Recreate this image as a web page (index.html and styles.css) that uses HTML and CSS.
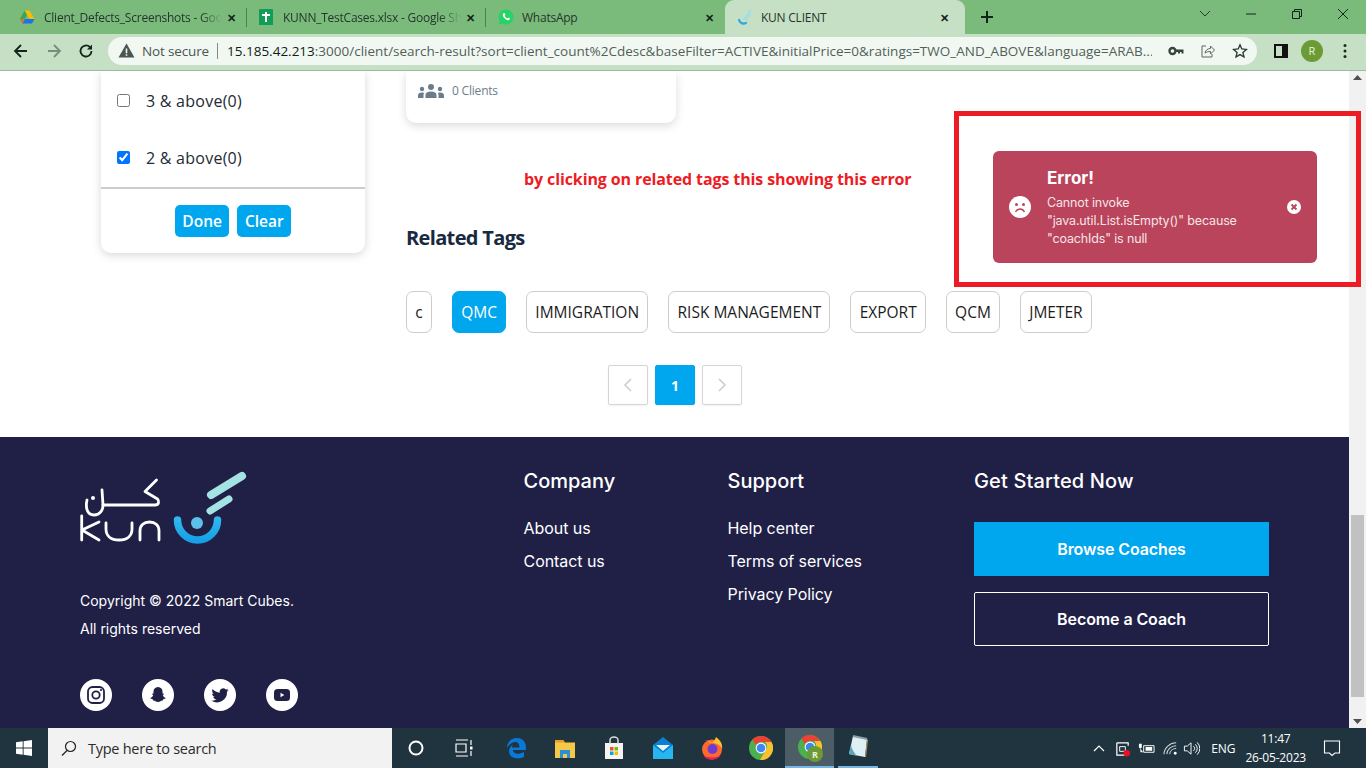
FILE: index.html
```html
<!DOCTYPE html>
<html lang="en">
<head>
<meta charset="utf-8">
<title>KUN CLIENT</title>
<link rel="stylesheet" href="styles.css">
</head>
<body>
<header class="tabstrip">
  <div class="tab tab-first">
    <svg class="fav" viewBox="0 0 16 16"><path d="M5.500 1.500h5l5 8.500h-5z" fill="#fbbc04"/><path d="M5.500 1.500 1 10l2.500 4.500L8 6z" fill="#34a853"/><path d="M5.800 10h9.700L13 14.500H3.500z" fill="#1a73e8"/><path d="M3.500 14.500 5.800 10H1z" fill="#ea6a35"/></svg>
    <span class="tab-title">Client_Defects_Screenshots - Goo</span>
    <span class="tab-x">✕</span>
  </div>
  <div class="tab tab-sheet">
    <svg class="fav" viewBox="0 0 16 16"><rect x="1" width="14" height="17" fill="#0f9d58" rx="1"/><path d="M4 6h8M8 3v10" stroke="#fff" stroke-width="2"/></svg>
    <span class="tab-title">KUNN_TestCases.xlsx - Google Sh</span>
    <span class="tab-x">✕</span>
  </div>
  <div class="tab tab-wa">
    <svg class="fav" viewBox="0 0 16 16"><path d="M8 .5a7.500 7.500 0 0 0-6.400 11.300L.5 15.500l3.800-1A7.500 7.500 0 1 0 8 .5z" fill="#25d366"/><path d="M5.500 4.200c-1.200 1-.9 2.800.6 4.600s3.500 3 4.900 2.200c1-.6 1-1.500.7-1.700l-1.500-.8-.8.9c-1-.3-2.300-1.600-2.700-2.700l.8-.8-.8-1.700c-.2-.2-.7-.2-1.200 0z" fill="#fff"/></svg>
    <span class="tab-title">WhatsApp</span>
    <span class="tab-x">✕</span>
  </div>
  <div class="tab tab-active">
    <svg class="fav" viewBox="0 0 16 16"><path d="M2 11a5 5 0 0 0 7 3" fill="none" stroke="#2aa9e8" stroke-width="2.200" stroke-linecap="round"/><path d="M7 10 14 1M9 11l4-6" stroke="#9fdde6" stroke-width="1.500" stroke-linecap="round"/></svg>
    <span class="tab-title">KUN CLIENT</span>
    <span class="tab-x">✕</span>
  </div>
  <svg class="newtab" viewBox="0 0 14 14"><path d="M7 1v12M1 7h12" stroke="#10261a" stroke-width="2"/></svg>
  <div class="win-controls">
    <svg viewBox="0 0 14 14"><path d="M2 4l5 5 5-5" fill="none" stroke="#26402c"/></svg>
    <svg viewBox="0 0 14 14"><path d="M2 7h10" stroke="#10261a"/></svg>
    <svg viewBox="0 0 14 14"><path d="M2.500 4.500h7v7h-7zM4.500 4.500v-2h7v7h-2" fill="none" stroke="#10261a"/></svg>
    <svg viewBox="0 0 14 14"><path d="M2 2l10 10M12 2 2 12" stroke="#10261a"/></svg>
  </div>
</header>

<nav class="toolbar">
  <svg class="nav-ic" viewBox="0 0 16 16"><path d="M14 8H2.500M8 2 2 8l6 6" fill="none" stroke="#15251b" stroke-width="1.800"/></svg>
  <svg class="nav-ic" viewBox="0 0 16 16"><path d="M2 8h11.500M8 2l6 6-6 6" fill="none" stroke="#74907a" stroke-width="1.800"/></svg>
  <svg class="nav-ic" viewBox="0 0 16 16"><path d="M13.500 8A5.500 5.500 0 1 1 11.800 4" fill="none" stroke="#15251b" stroke-width="1.800"/><path d="M14 1.500V6.500H9z" fill="#15251b"/></svg>
  <div class="omnibox">
    <svg class="warn" viewBox="0 0 16 16"><path d="M8 1.500 15.500 14.500H.5z" fill="#4a5550"/><path d="M8 6v4.500M8 11.500v1.500" stroke="#f2f8f2" stroke-width="1.500"/></svg>
    <span class="insecure">Not secure</span>
    <span class="omni-sep"></span>
    <span class="url"><b>15.185.42.213</b>:3000/client/search-result?sort=client_count%2Cdesc&amp;baseFilter=ACTIVE&amp;initialPrice=0&amp;ratings=TWO_AND_ABOVE&amp;language=ARAB...</span>
    <svg class="omni-ic" viewBox="0 0 16 16"><circle cx="4.500" cy="8" r="3" fill="none" stroke="#39443d" stroke-width="2.400"/><path d="M7 6.500h8.500v4h-2V9H12v1.500h-2V9H7z" fill="#39443d"/></svg>
    <svg class="omni-ic" viewBox="0 0 16 16"><path d="M6 3H2v11h10v-3" fill="none" stroke="#596a5e"/><path d="M5 10c.5-3 3-4.500 5.500-4.500V3l4 4-4 4V8.500C8.500 8.500 6.500 9 5 10z" fill="none" stroke="#596a5e"/></svg>
    <svg class="omni-ic" viewBox="0 0 16 16"><path d="M8 1.800 9.800 6l4.700.4-3.600 3 1.100 4.600L8 11.600 4 14l1.100-4.600-3.600-3L6.200 6z" fill="none" stroke="#26352b" stroke-width="1.300"/></svg>
  </div>
  <svg class="side-ic" viewBox="0 0 14 14"><path d="M1 1h12v12H1z" fill="none" stroke="#111" stroke-width="2"/><path d="M8 1h5v12H8z" fill="#111"/></svg>
  <span class="avatar">R</span>
  <svg class="menu-ic" viewBox="0 0 4 16"><circle cx="2" cy="2.500" r="1.500"/><circle cx="2" cy="8" r="1.500"/><circle cx="2" cy="13.500" r="1.500"/></svg>
</nav>

<div class="viewport">
  <main class="page">
    <section class="results">
      <aside class="filter">
        <label class="filter-row"><input type="checkbox"><span>3 &amp; above(0)</span></label>
        <label class="filter-row"><input type="checkbox" checked><span>2 &amp; above(0)</span></label>
        <div class="filter-actions">
          <button class="btn">Done</button>
          <button class="btn">Clear</button>
        </div>
      </aside>
      <div class="content">
        <article class="coach-card">
          <svg class="people" viewBox="0 0 26 14"><g fill="#6b7c8c"><circle cx="13" cy="3" r="3"/><path d="M7.500 14v-3c0-2 2-3.500 5.500-3.500s5.500 1.500 5.500 3.500v3z"/><circle cx="4" cy="5" r="2.200"/><path d="M0 14v-2.500C0 9.500 1.500 8.500 4 8.500c1 0 1.500.2 2 .4-.4.800-.5 1.500-.5 2.100v3z"/><circle cx="22" cy="5" r="2.200"/><path d="M26 14v-2.500c0-2-1.500-3-4-3-1 0-1.500.2-2 .4.400.800.500 1.500.500 2.100v3z"/></g></svg>
          <span>0 Clients</span>
        </article>
        <h2 class="related">Related Tags</h2>
        <div class="tags">
          <span class="tag tag-c">c</span>
          <span class="tag tag-on">QMC</span>
          <span class="tag">IMMIGRATION</span>
          <span class="tag">RISK MANAGEMENT</span>
          <span class="tag">EXPORT</span>
          <span class="tag">QCM</span>
          <span class="tag">JMETER</span>
        </div>
        <div class="pager">
          <span class="page-btn"><svg viewBox="0 0 10 16"><path d="M8 2 2 8l6 6" fill="none" stroke="#ccc" stroke-width="1.500"/></svg></span>
          <span class="page-btn page-on">1</span>
          <span class="page-btn"><svg viewBox="0 0 10 16"><path d="M2 2l6 6-6 6" fill="none" stroke="#ccc" stroke-width="1.500"/></svg></span>
        </div>
      </div>
    </section>

    <footer class="footer">
      <div class="brand">
        <svg class="logo" viewBox="0 0 170 75">
          <defs><linearGradient id="arc" x1="0" y1="0" x2="0" y2="1"><stop offset="0" stop-color="#2fb6ee"/><stop offset="1" stop-color="#17a0e6"/></linearGradient></defs>
          <g fill="none" stroke="#fff" stroke-width="2.800" stroke-linecap="round" stroke-linejoin="round">
            <path d="M1.700 46v24M19 52 2 60l17 10"/>
            <path d="M26 53v6c0 7 5 11 13 11s13-4 13-11v-6"/>
            <path d="M60 70v-9c0-6 4-9 9.500-9s9.500 3 9.500 9v9"/>
            <path d="M76.500 10 65 21.500 77.500 29c2 2 1.500 6-2.500 6H23"/>
            <path d="M22 20l1 15c0 5-3 10-9 10-6 0-9-6-7-15"/>
          </g>
          <circle cx="13" cy="28" r="2" fill="#fff"/>
          <path d="M97.500 50a20 20 0 0 0 40 0" fill="none" stroke="url(#arc)" stroke-width="7.500" stroke-linecap="round"/>
          <circle cx="117" cy="53" r="6" fill="#5cc0ea"/>
          <path d="M131 25 162 6" stroke="#a4e3e4" stroke-width="8" stroke-linecap="round"/>
          <path d="M130 41 149 29" stroke="#a4e3e4" stroke-width="7" stroke-linecap="round"/>
        </svg>
        <p class="copy">Copyright © 2022 Smart Cubes.</p>
        <p class="copy">All rights reserved</p>
        <div class="socials">
          <span class="social"><svg viewBox="0 0 20 20"><rect x="2" y="2" width="16" height="16" rx="4.500" fill="none" stroke="#202047" stroke-width="1.800"/><circle cx="10" cy="10" r="3.700" fill="none" stroke="#202047" stroke-width="1.800"/><circle cx="15" cy="5" r="1.100" fill="#202047"/></svg></span>
          <span class="social"><svg viewBox="0 0 20 20"><path d="M10 2c3 0 4.500 2.200 4.500 4.500v2l1.500.3c.4.500-.8 1-1.300 1.300.5 1.600 1.800 2.600 3 3-.2.900-1.500.9-2.400 1.200l-.5 1.200c-1.500-.3-2.600 1.500-4.800 1.500s-3.300-1.800-4.800-1.500l-.5-1.200c-.9-.3-2.200-.3-2.400-1.200 1.200-.4 2.500-1.400 3-3C4.800 9.800 3.600 9.300 4 8.800l1.500-.3v-2C5.500 4.200 7 2 10 2z" fill="#202047"/></svg></span>
          <span class="social"><svg viewBox="0 0 20 20"><path d="M18.500 5c-.6.300-1.300.5-2 .6.700-.4 1.300-1.100 1.500-1.900-.7.400-1.400.7-2.200.8a3.500 3.500 0 0 0-6 3.200C6.900 7.600 4.300 6.200 2.600 4.100c-.9 1.600-.5 3.600 1.100 4.700-.6 0-1.100-.2-1.600-.4 0 1.700 1.200 3.100 2.800 3.500-.5.100-1 .1-1.600 0 .4 1.400 1.800 2.400 3.300 2.400A7 7 0 0 1 1.500 15.700 10 10 0 0 0 17 6.800c.6-.5 1.100-1.100 1.500-1.800z" fill="#202047"/></svg></span>
          <span class="social"><svg viewBox="0 0 20 20"><rect x="2" y="4" width="16" height="12" rx="3.500" fill="#202047"/><path d="M8.500 7.700v4.600l3.800-2.300z" fill="#fff"/></svg></span>
        </div>
      </div>
      <div class="links col-company">
        <h3>Company</h3>
        <a>About us</a>
        <a>Contact us</a>
      </div>
      <div class="links col-support">
        <h3>Support</h3>
        <a>Help center</a>
        <a>Terms of services</a>
        <a>Privacy Policy</a>
      </div>
      <div class="start">
        <h3>Get Started Now</h3>
        <a class="cta cta-fill">Browse Coaches</a>
        <a class="cta cta-line">Become a Coach</a>
      </div>
    </footer>

    <p class="note">by clicking on related tags this showing this error</p>
    <div class="toast">
      <svg class="toast-face" viewBox="0 0 22 22"><circle cx="11" cy="11" r="11" fill="#fff"/><circle cx="7.500" cy="8.500" r="1.500" fill="#b9445c"/><circle cx="14.500" cy="8.500" r="1.500" fill="#b9445c"/><path d="M6.500 16c1-2 2.500-3 4.500-3s3.500 1 4.500 3" fill="none" stroke="#b9445c" stroke-width="1.500"/></svg>
      <div class="toast-body">
        <strong>Error!</strong>
        <p>Cannot invoke<br>"java.util.List.isEmpty()" because<br>"coachIds" is null</p>
      </div>
      <svg class="toast-x" viewBox="0 0 14 14"><circle cx="7" cy="7" r="7" fill="#fff"/><path d="M4.500 4.500l5 5M9.500 4.500l-5 5" stroke="#b9445c" stroke-width="1.800"/></svg>
    </div>
  </main>
  <div class="scrollbar">
    <svg class="sb-arrow" viewBox="0 0 9 5"><path d="M4.500 0 9 5H0z" fill="#505050"/></svg>
    <div class="sb-track"><div class="sb-thumb"></div></div>
    <svg class="sb-arrow" viewBox="0 0 9 5"><path d="M0 0h9L4.500 5z" fill="#505050"/></svg>
  </div>
  <div class="callout"></div>
</div>

<div class="taskbar">
  <svg class="start-ic" viewBox="0 0 16 16"><path d="M0 2.300 6.700 1.300V7.500H0zM7.600 1.200 16 0V7.500H7.600zM0 8.500H6.700V14.700L0 13.700zM7.600 8.500H16V16L7.600 14.800z" fill="#fff"/></svg>
  <div class="search">
    <svg viewBox="0 0 16 16"><circle cx="9.500" cy="6.500" r="5" fill="none" stroke="#222" stroke-width="1.200"/><path d="M6 10.500 1 15.500" stroke="#222" stroke-width="1.300"/></svg>
    <span>Type here to search</span>
  </div>
  <div class="tb-slot tb-sys"><svg viewBox="0 0 24 24"><circle cx="12" cy="12" r="6.500" fill="none" stroke="#fff" stroke-width="2"/></svg></div>
  <div class="tb-slot tb-sys tb-task"><svg viewBox="0 0 24 24"><path d="M4 4h12M4 20h12M4 8h10v8H4zM19 4v5M19 15v5" fill="none" stroke="#fff" stroke-width="1.200"/><rect x="18" y="10.500" width="2.500" height="3" fill="#fff"/></svg></div>
  <div class="tb-slot"><svg viewBox="0 0 24 24"><path d="M3 12C3 5.500 8 2 13 2c6 0 9 4.500 9 10v2H9c.3 4 5.500 5 11 2v5c-5 2.500-15 2-15-6 0-3 2-5 4-6.500-.8 1.200-1 2-1 3h7.500C15.500 8 14 6 11.500 6 8 6 5 8.500 3 12z" fill="#0a78d6"/></svg></div>
  <div class="tb-slot"><svg viewBox="0 0 24 24"><path d="M2 4h8l2 2.500h10V22H2z" fill="#f6c84a"/><path d="M2 4h8l2 2.500H2z" fill="#e8a01e"/><path d="M7 14h10v8H7z" fill="#2a8fd4"/><path d="M10 18h4v4h-4z" fill="#f6c84a"/></svg></div>
  <div class="tb-slot"><svg viewBox="0 0 24 24"><path d="M3 7h18v16H3z" fill="#f4f4f4"/><path d="M8 8V4a4 3 0 0 1 8 0v4" fill="none" stroke="#ddd" stroke-width="1.500"/><path d="M8 11h3.500v3.500H8z" fill="#f25022"/><path d="M12.500 11H16v3.500h-3.500z" fill="#7fba00"/><path d="M8 15.500h3.500V19H8z" fill="#00a4ef"/><path d="M12.500 15.500H16V19h-3.500z" fill="#ffb900"/></svg></div>
  <div class="tb-slot"><svg viewBox="0 0 24 24"><path d="M2 9l10-8 10 8v14H2z" fill="#0b7fd0"/><path d="M5 9h14l-7 6z" fill="#e8f6fb"/><path d="M2 9l10 8 10-8v14H2z" fill="#29b6f0"/></svg></div>
  <div class="tb-slot"><svg viewBox="0 0 24 24"><circle cx="12" cy="13.500" r="10" fill="#ff6a2b"/><path d="M5 4c3 0 4 2 5 3 4-1 5-3 6-6 4 3 7 7 6 12-1-3-3-4-5-5z" fill="#ffc02e"/><circle cx="12.500" cy="13" r="5" fill="#6f3bd0"/><path d="M3 20c5 5 14 5 18-1-5 3-10 3-18 1z" fill="#e61f63"/></svg></div>
  <div class="tb-slot"><svg class="chrome" viewBox="0 0 24 24"><circle cx="12" cy="12" r="12" fill="#4caf50"/><path d="M12 0a12 12 0 0 1 10.400 6H12a6 6 0 0 0-5.200 3L3.300 3.500A12 12 0 0 1 12 0z" fill="#ea4335"/><path d="M22.400 6A12 12 0 0 1 11 24l5.200-9a6 6 0 0 0 0-9z" fill="#fbc02d"/><circle cx="12" cy="12" r="5.400" fill="#fff"/><circle cx="12" cy="12" r="4.300" fill="#3f86f4"/></svg></div>
  <div class="tb-slot tb-active"><svg class="chrome" viewBox="0 0 24 24"><circle cx="12" cy="12" r="12" fill="#4caf50"/><path d="M12 0a12 12 0 0 1 10.400 6H12a6 6 0 0 0-5.200 3L3.300 3.500A12 12 0 0 1 12 0z" fill="#ea4335"/><path d="M22.400 6A12 12 0 0 1 11 24l5.200-9a6 6 0 0 0 0-9z" fill="#fbc02d"/><circle cx="12" cy="12" r="5.400" fill="#fff"/><circle cx="12" cy="12" r="4.300" fill="#3f86f4"/></svg><span class="tb-badge">R</span></div>
  <div class="tb-slot tb-open"><svg viewBox="0 0 24 24"><path d="M7 1 21 4l-2 18L3 19z" fill="#dff0f5"/><path d="M5 10 3 19l8 2c-3-3-5-7-6-11z" fill="#5aa8bd"/><path d="M7 1l14 3" stroke="#8a9ea8" stroke-width="2"/><path d="M19 22l2-18 1 1-2 17z" fill="#a89466"/></svg></div>
  <div class="tray">
    <svg class="tray-chev" viewBox="0 0 14 14"><path d="M2 10l5-5 5 5" fill="none" stroke="#fff" stroke-width="1.200"/></svg>
    <svg class="tray-ic" viewBox="0 0 18 18"><path d="M3 3h12v3M3 3v13h9" fill="none" stroke="#fff" stroke-width="1.300"/><path d="M6 7h6v5H6z" fill="none" stroke="#fff"/><circle cx="13.500" cy="14" r="3.500" fill="#e81123"/></svg>
    <svg class="tray-ic" viewBox="0 0 18 18"><path d="M6 6h11v7H6z" fill="none" stroke="#fff"/><path d="M8 7.500h7v4H8zM1 4h3v3.500a1.500 1.500 0 0 1-3 0zM2.500 9v4h3" fill="#fff"/></svg>
    <svg class="tray-ic tray-wifi" viewBox="0 0 18 18"><path d="M2 15a13 13 0 0 1 13-12M5 15a10 10 0 0 1 10-9M8 15a7 7 0 0 1 7-6" fill="none" stroke="#cfd6da" stroke-width="1.100"/><circle cx="14" cy="14" r="1.500" fill="#fff"/></svg>
    <svg class="tray-ic" viewBox="0 0 18 18"><path d="M1.500 6.500h3l4-3.500v12l-4-3.500h-3z" fill="none" stroke="#fff"/><path d="M11 6.500a3 3 0 0 1 0 5M13 4.500a6 6 0 0 1 0 9M15 2.500a9 9 0 0 1 0 13" fill="none" stroke="#fff"/></svg>
    <span class="lang">ENG</span>
    <span class="clock"><span>11:47</span><span>26-05-2023</span></span>
    <svg class="notif" viewBox="0 0 18 18"><path d="M1.500 2h15v12H12l-3 2.500L6.500 14h-5z" fill="none" stroke="#fff" stroke-width="1.100"/></svg>
  </div>
</div>
</body>
</html>
```

FILE: styles.css
```css
* { box-sizing: border-box; }
html, body { margin: 0; height: 768px; overflow: hidden; }
body { display: flex; flex-direction: column; width: 1366px; font-family: "Open Sans", sans-serif; background: #fff; }
p, h2, h3 { margin: 0; }

/* browser chrome */
.tabstrip { height: 34px; flex: none; display: flex; align-items: center; background: #7abb7c; padding-left: 14px; }
.tab { width: 239px; height: 34px; display: flex; align-items: center; padding: 0 9px 0 7px; position: relative; flex: none; }
.tab::after { content: ""; position: absolute; right: 0; top: 8px; width: 1px; height: 19px; background: #4e7f52; }
.tab-first { width: 233px; padding-left: 1px; }
.tab-wa { padding-left: 8px; }
.tab-wa::after, .tab-active::after { display: none; }
.fav { width: 16px; height: 16px; margin: 0 9px 0 4px; flex: none; }
.tab-wa .fav { margin-right: 8px; }
.tab-title { flex: 1; min-width: 0; overflow: hidden; white-space: nowrap; font-size: 12px; color: #26352b; letter-spacing: -.24px; }
.tab-first .tab-title, .tab-sheet .tab-title { -webkit-mask-image: linear-gradient(to right, #000 88%, transparent); mask-image: linear-gradient(to right, #000 88%, transparent); }
.tab-x { font-size: 11px; font-weight: 700; color: #14241a; width: 14px; text-align: center; margin-left: 2px; }
.tab-active { width: 240px; background: #c5e0c5; border-radius: 9px 9px 0 0; padding-left: 8px; padding-right: 14px; margin-left: 0; }
.tab-active .fav { margin-right: 8px; }
.newtab { width: 14px; height: 14px; margin-left: 15px; flex: none; }
.win-controls { margin-left: auto; display: flex; padding-right: 16px; margin-bottom: 6px; }
.win-controls svg { width: 14px; height: 14px; margin-left: 32px; }

.toolbar { height: 37px; flex: none; display: flex; align-items: center; background: #c5e0c5; border-bottom: 1px solid #9fb9a0; padding: 0 0 3px 13px; }
.nav-ic { width: 16px; height: 16px; margin-right: 17px; flex: none; }
.nav-ic:nth-child(2) { margin-right: 16px; }
.nav-ic:nth-child(3) { margin-right: 14px; }
.omnibox { width: 1149px; height: 28px; background: #f1f8f1; border-radius: 14px; display: flex; align-items: center; padding: 0 9px 0 10px; flex: none; }
.warn { width: 17px; height: 17px; flex: none; }
.insecure { font-size: 13.500px; color: #4a5550; margin-left: 7px; letter-spacing: -.15px; }
.omni-sep { width: 1px; height: 16px; background: #7d8b80; margin: 0 9px 0 8px; flex: none; }
.url { font-size: 13.500px; color: #52605a; white-space: nowrap; overflow: hidden; flex: 1; min-width: 0; }
.url b { font-weight: 400; color: #101c14; }
.omni-ic { width: 16px; height: 16px; margin-left: 16px; flex: none; }
.side-ic { width: 14px; height: 14px; margin-left: 17px; flex: none; }
.avatar { width: 22px; height: 22px; margin-left: 13px; border-radius: 50%; background: #6c9a35; color: #e8f3d8; font-size: 11px; display: flex; align-items: center; justify-content: center; flex: none; }
.menu-ic { width: 4px; height: 16px; margin-left: 20px; flex: none; fill: #1b2a20; }

/* page viewport */
.viewport { height: 657px; flex: none; display: flex; position: relative; }
.page { width: 1349px; position: relative; overflow: hidden; display: flex; flex-direction: column; }
.scrollbar { width: 17px; background: #f1f1f1; display: flex; flex-direction: column; align-items: center; padding: 4px 0; }
.sb-arrow { width: 9px; height: 5px; flex: none; }
.sb-track { flex: 1; width: 100%; padding-top: 435px; }
.sb-thumb { height: 182px; margin: 0 2px; background: #c1c1c1; }

.results { height: 366px; flex: none; display: flex; padding-left: 101px; }
.filter { width: 264px; height: 182px; background: #fff; border-radius: 0 0 10px 10px; box-shadow: 0 2px 10px rgba(0,0,0,.16); padding-top: 1px; flex: none; }
.filter-row { height: 57px; display: flex; align-items: center; padding-left: 16px; font-size: 16px; color: #212b36; letter-spacing: .25px; }
.filter-row input { width: 13px; height: 13px; margin: 0 16px 1px 0; accent-color: #0075ff; }
.filter-actions { border-top: 2px solid #ccc; margin-top: 1px; height: 65px; display: flex; justify-content: center; gap: 8px; padding-top: 16px; }
.btn { height: 32px; padding: 0 7.500px; border: 0; border-radius: 5px; background: #00a7ee; color: #fff; font: 600 15.500px "Open Sans", sans-serif; }
.content { margin-left: 41px; flex: 1; min-width: 0; }
.coach-card { width: 270px; height: 52px; background: #fff; border-radius: 0 0 10px 10px; box-shadow: 0 3px 10px rgba(0,0,0,.14); display: flex; align-items: flex-start; padding: 12px 0 0 12px; font-size: 12px; color: #6b7c8c; }
.people { width: 26px; height: 14px; margin: 1px 8px 0 0; flex: none; }
.coach-card span { line-height: 16px; letter-spacing: -.2px; }
.related { font-size: 20px; font-weight: 700; color: #19293f; margin: 101px 0 0; line-height: 28px; letter-spacing: -.65px; }
.tags { display: flex; gap: 20px; margin-top: 39px; }
.tag { height: 42px; padding: 0 8.200px; border: 1px solid #ccc; border-radius: 7px; display: flex; align-items: center; font-size: 15.500px; color: #1c1c1c; }
.tag-c { width: 26px; justify-content: center; }
.tag-on { background: #00a7ee; border-color: #00a7ee; color: #fff; }
.pager { display: flex; gap: 7px; margin: 32px 0 0 202px; }
.page-btn { width: 40px; height: 40px; border: 1px solid #d5d5d5; border-radius: 2px; display: flex; align-items: center; justify-content: center; box-shadow: 0 1px 2px rgba(0,0,0,.06); font-size: 14px; font-weight: 700; }
.page-btn svg { width: 10px; height: 16px; }
.page-on { background: #00a7ee; border-color: #00a7ee; color: #fff; }

/* footer */
.footer { flex: 1; background: #202047; color: #fff; display: flex; padding: 34px 0 0 80px; font-family: Inter, sans-serif; }
.brand { width: 443.500px; flex: none; }
.logo { width: 170px; height: 75px; display: block; margin-top: -1px; }
.copy { font-size: 14px; line-height: 28px; }
.logo + .copy { margin-top: 42px; }
.socials { display: flex; gap: 30px; margin-top: 36px; }
.social { width: 32px; height: 32px; border-radius: 50%; background: #fff; display: flex; align-items: center; justify-content: center; }
.social svg { width: 20px; height: 20px; }
.links { display: flex; flex-direction: column; }
.links h3, .start h3 { font-size: 20px; font-weight: 500; line-height: 20px; margin-bottom: 21px; }
.links a { font-size: 16px; line-height: 33px; letter-spacing: -.06px; }
.col-company { width: 204px; flex: none; }
.col-support { width: 246.500px; flex: none; }
.start { width: 295px; flex: none; }
.start h3 { margin-bottom: 31px; letter-spacing: .14px; }
.cta { height: 54px; display: flex; align-items: center; justify-content: center; font-size: 16px; font-weight: 600; letter-spacing: -.1px; }
.cta-fill { background: #00a7ee; margin-bottom: 16px; }
.cta-line { border: 1px solid #fff; border-radius: 2px; }

/* overlays on the page */
.note { position: absolute; left: 524px; top: 97px; font: 700 16px/22px "Open Sans", sans-serif; color: #ed1c24; letter-spacing: -.11px; white-space: nowrap; }
.callout { position: absolute; left: 954px; top: 40px; width: 407px; height: 176px; border: 5px solid #ed1c24; }
.toast { position: absolute; left: 993px; top: 80px; width: 324px; height: 112px; background: #b9445c; border-radius: 6px; color: #fff; display: flex; align-items: center; padding: 0 16px; font-family: Inter, sans-serif; }
.toast-face { width: 22px; height: 22px; flex: none; margin-right: 16px; }
.toast-body { flex: 1; min-width: 0; }
.toast-body strong { display: block; font-size: 17px; line-height: 22px; font-weight: 700; margin-bottom: 5px; }
.toast-body p { font-size: 12.500px; line-height: 18px; letter-spacing: -.15px; color: #f6e4e8; }
.toast-x { width: 14px; height: 14px; flex: none; }

/* taskbar */
.taskbar { height: 40px; flex: none; display: flex; align-items: center; background: #20343f; }
.start-ic { width: 16px; height: 16px; margin: 0 16px; flex: none; }
.search { width: 344px; height: 40px; background: #f2f2f2; display: flex; align-items: center; padding-left: 13px; font-size: 14.500px; color: #2b2b2b; flex: none; }
.search svg { width: 16px; height: 16px; margin-right: 11px; }
.search span { letter-spacing: -.26px; }
.tb-slot { width: 49px; height: 40px; display: flex; align-items: center; justify-content: center; position: relative; flex: none; }
.tb-sys { width: 48px; }
.tb-task { margin-right: 3px; }
.tb-slot svg { width: 24px; height: 24px; }
.tb-active { background: #4d5d66; border-bottom: 2px solid #74b6e6; }
.tb-open { border-bottom: 2px solid #74b6e6; margin-left: 4px; width: 40px; }
.tb-badge { position: absolute; left: 22px; top: 18px; width: 16px; height: 16px; border-radius: 50%; background: #6c9a35; color: #e8f3d8; font-size: 9px; font-weight: 700; display: flex; align-items: center; justify-content: center; }
.tray { margin-left: auto; display: flex; align-items: center; padding-right: 25px; color: #fff; }
.tray-chev { width: 14px; height: 14px; margin-right: 8px; }
.tray-ic { width: 17px; height: 17px; margin-right: 7px; }
.tray-wifi { margin-right: 4px; }
.lang { font-size: 12px; margin: 0 10px 0 4px; letter-spacing: -.1px; }
.clock { display: flex; flex-direction: column; align-items: center; font-size: 12px; line-height: 19px; margin-right: 17px; letter-spacing: -.2px; }
.notif { width: 18px; height: 18px; }
```
